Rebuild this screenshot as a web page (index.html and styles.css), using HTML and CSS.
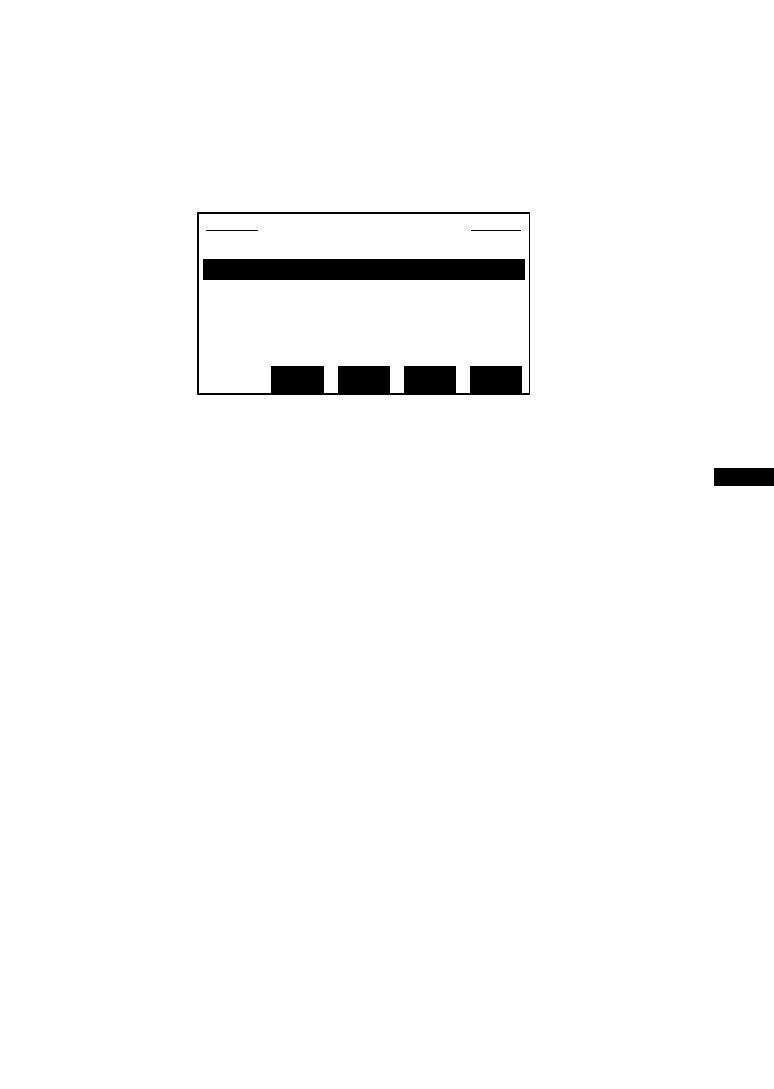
FILE: index.html
```html
<!DOCTYPE html>
<html lang="en">
<head>
  <meta charset="utf-8">
  <meta name="viewport" content="width=device-width, initial-scale=1">
  <title>Display panel</title>
  <link rel="stylesheet" href="styles.css">
</head>
<body>
  <main class="page">
    <section class="panel">
      <header class="panel-header">
        <span class="rule rule-start"></span>
        <span class="rule rule-end"></span>
      </header>
      <div class="selected-row"></div>
      <div class="softkeys">
        <button class="softkey" type="button" aria-label="F1"></button>
        <button class="softkey" type="button" aria-label="F2"></button>
        <button class="softkey" type="button" aria-label="F3"></button>
        <button class="softkey" type="button" aria-label="F4"></button>
      </div>
    </section>
    <div class="edge-tab"></div>
  </main>
</body>
</html>
```

FILE: styles.css
```css
body {
  margin: 0;
  background: #fff;
  font-family: "Liberation Sans", sans-serif;
}

.page {
  display: flex;
  flex-direction: column;
  gap: 73px;
  padding-top: 212px;
}

.panel {
  margin: 0 244px 0 197px;
  border: 2px solid #000;
  border-right-width: 1px;
}

.panel-header {
  display: flex;
  justify-content: space-between;
  padding: 16px 8px 28px 7px;
}

.rule {
  height: 1px;
  background: #000;
}

.rule-start {
  width: 52px;
}

.rule-end {
  width: 50px;
}

.selected-row {
  height: 21px;
  margin: 0 4px;
  background: #000;
}

.softkeys {
  display: flex;
  justify-content: flex-end;
  gap: 14px;
  padding: 86px 7px 0 0;
}

.softkey {
  width: 52px;
  height: 27px;
  padding: 0;
  border: 0;
  border-radius: 0;
  background: #000;
}

.softkey:first-child {
  width: 53px;
}

.edge-tab {
  align-self: flex-end;
  width: 60px;
  height: 18px;
  background: #000;
}
```
